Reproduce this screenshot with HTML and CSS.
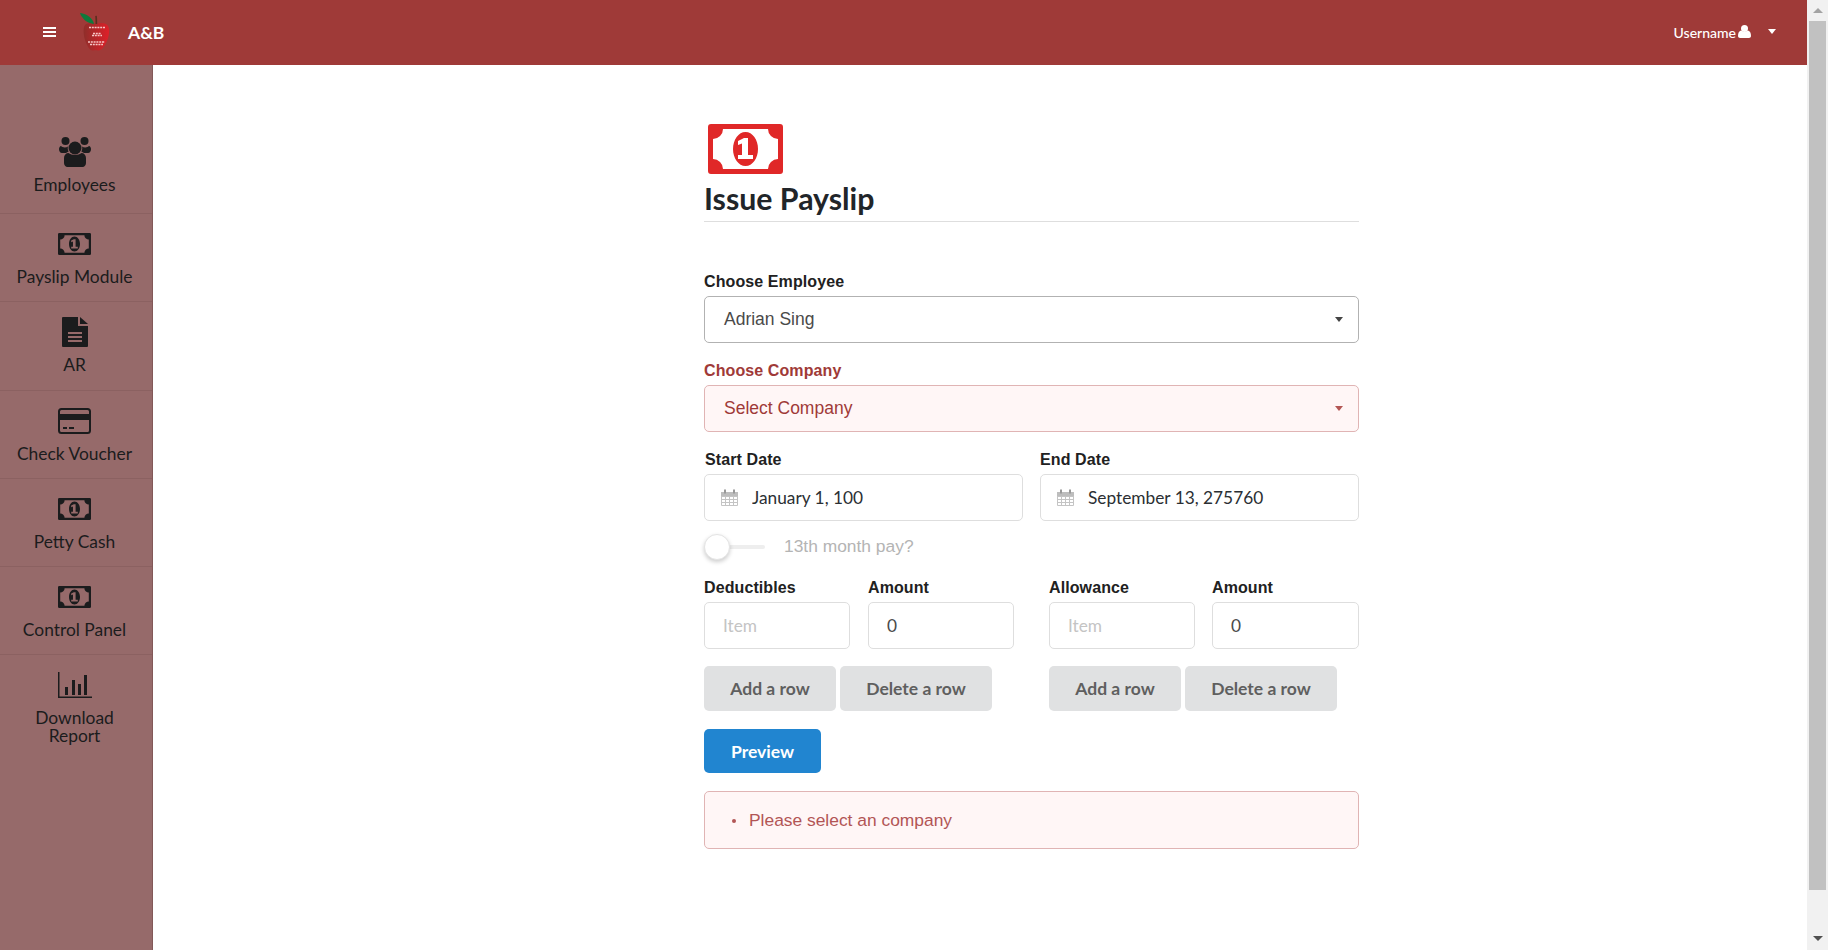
FILE: index.html
```html
<!DOCTYPE html>
<html>
  <head>
    <link rel="stylesheet" href="styles.css">
    <title>Issue Payslip</title>
  </head>
  <body>
    <!-- Shared icons -->
    <svg class="defs" width="0" height="0">
      <defs>
        <linearGradient id="appleRed" x1="0" x2="1" y1="0" y2="0">
          <stop offset="0" stop-color="#8f2e2a"/>
          <stop offset="0.5" stop-color="#b8262a"/>
          <stop offset="1" stop-color="#df1f28"/>
        </linearGradient>
      </defs>
      <symbol id="money" viewBox="0 0 75 50">
        <path fill-rule="evenodd" d="M3 0H72a3 3 0 0 1 3 3V47a3 3 0 0 1-3 3H3a3 3 0 0 1-3-3V3a3 3 0 0 1 3-3ZM15 5a10 10 0 0 1-10 10V35a10 10 0 0 1 10 10H60a10 10 0 0 1 10-10V15a10 10 0 0 1-10-10Z" fill="currentColor"/>
        <path fill-rule="evenodd" d="M37.5 8c7 0 12.500 7.600 12.500 17s-5.500 17-12.500 17-12.500-7.600-12.500-17 5.500-17 12.500-17ZM36 14l-6 3v4l4-1.500V31h-4v4h15v-4h-5V14Z" fill="currentColor"/>
      </symbol>
    </svg>

    <div class="app">
      <div class="page">
        <header class="topbar">
          <div class="brand">
            <svg class="burger" width="13" height="10" viewBox="0 0 13 10"><path d="M0 0h13v2H0zM0 4h13v2H0zM0 8h13v2H0z" fill="#fff"/></svg>
            <svg class="logo" width="30" height="38" viewBox="0 0 30 38">
              <path d="M16 11c-3-1.500-7-1.500-10 0C3 13 3 20 5 27c2 6 5 11 8 10.500 2-.5 3-.5 5 0 4 .5 8-6 10-12.500 2-7 1.500-12-2-14-3-1.500-7-1-10 0Z" fill="url(#appleRed)"/>
              <path d="M0 0c2 6 7 10 14 11C13 5 7 1 0 0Z" fill="#0f7a3c"/>
              <path d="M15.500 11c0-3 0-5-.3-8l1.600-.3c.4 3 .4 5.300.4 8.300Z" fill="#5b2d1e"/>
              <path d="M9 14.500h16M13 20.500h8M12 22.500h10M8 29h17M10 31.500h13" fill="none" stroke="#f6c4c4" stroke-width="1.300" stroke-dasharray="2 .8"/>
            </svg>
            <span class="brand-name">A&amp;B</span>
          </div>
          <div class="user">
            <span>Username</span>
            <svg width="13" height="13" viewBox="0 0 13 13"><circle cx="6.500" cy="3.500" r="3.500" fill="#fff"/><path d="M0 11c0-3 1-5 3-5.500 2 1.500 5 1.500 7 0 2 .5 3 2.500 3 5.500 0 1.300-1 2-2 2H2c-1 0-2-.7-2-2Z" fill="#fff"/></svg>
            <i class="caret caret-user"></i>
          </div>
        </header>

        <div class="body">
          <nav class="sidebar">
            <a class="side-item first">
              <svg class="side-icon" width="32" height="30" viewBox="0 0 32 30" fill="currentColor">
                <circle cx="6.500" cy="4" r="4"/><circle cx="25.500" cy="4" r="4"/><circle cx="16" cy="11" r="6.500"/>
                <path d="M0 12c0-1.500 1-3 2-3 1 1.500 5 2 7 .5-.5 1.500-.3 3.500.7 5-1 .3-2 1-2.700 1.500H3c-2 0-3-2-3-4ZM32 12c0-1.500-1-3-2-3-1 1.500-5 2-7 .5.5 1.500.3 3.500-.7 5 1 .3 2 1 2.700 1.500h4c2 0 3-2 3-4Z"/>
                <path d="M5 21c0-3 2-5 4.500-5 3 2.500 10 2.500 13 0C25 16 27 18 27 21v5c0 2-1.500 4-3.500 4H8.500C6.500 30 5 28 5 26Z"/>
              </svg>
              <span>Employees</span>
            </a>
            <a class="side-item">
              <svg class="side-icon" width="33" height="22"><use href="#money"/></svg>
              <span>Payslip Module</span>
            </a>
            <a class="side-item">
              <svg class="side-icon" width="26" height="30" viewBox="0 0 26 30" fill="currentColor">
                <path fill-rule="evenodd" d="M1 0H16V9H26V29a1 1 0 0 1-1 1H1a1 1 0 0 1-1-1V1a1 1 0 0 1 1-1ZM6 15v2H20V15ZM6 19v2H20V19ZM6 23v2H20V23Z"/>
                <path d="M18 0l8 7H18Z"/>
              </svg>
              <span>AR</span>
            </a>
            <a class="side-item">
              <svg class="side-icon" width="33" height="26" viewBox="0 0 33 26">
                <rect x="1" y="1" width="31" height="24" rx="2.500" fill="none" stroke="currentColor" stroke-width="2"/>
                <path d="M1 6h31v6H1zM5 19h4v2H5zM11 19h5v2h-5z" fill="currentColor"/>
              </svg>
              <span>Check Voucher</span>
            </a>
            <a class="side-item">
              <svg class="side-icon" width="33" height="22"><use href="#money"/></svg>
              <span>Petty Cash</span>
            </a>
            <a class="side-item">
              <svg class="side-icon" width="33" height="22"><use href="#money"/></svg>
              <span>Control Panel</span>
            </a>
            <a class="side-item">
              <svg class="side-icon" width="34" height="26" viewBox="0 0 34 26" fill="currentColor">
                <path d="M0 0h1.500v24.500H34V26H0ZM7 15h3v8H7ZM14 8h3v15h-3ZM20 12h3v11h-3ZM26 3h3v20h-3Z"/>
              </svg>
              <span>Download<br>Report</span>
            </a>
          </nav>

          <main class="content">
            <div class="panel">
              <svg class="title-icon" width="75" height="50"><use href="#money"/></svg>
              <h1 class="title">Issue Payslip</h1>

              <form class="form">
                <div class="field">
                  <label>Choose Employee</label>
                  <div class="select">
                    <span>Adrian Sing</span>
                    <i class="caret"></i>
                  </div>
                </div>

                <div class="field error">
                  <label>Choose Company</label>
                  <div class="select">
                    <span>Select Company</span>
                    <i class="caret"></i>
                  </div>
                </div>

                <div class="date-row">
                  <div class="field">
                    <label class="nudge">Start Date</label>
                    <div class="date-input">
                      <svg class="cal"><use href="#cal"/></svg>
                      <input type="text" value="January 1, 100">
                    </div>
                  </div>
                  <div class="field">
                    <label>End Date</label>
                    <div class="date-input">
                      <svg class="cal"><use href="#cal"/></svg>
                      <input type="text" value="September 13, 275760">
                    </div>
                  </div>
                </div>

                <div class="toggle">
                  <span class="track"><span class="knob"></span></span>
                  <span class="toggle-label">13th month pay?</span>
                </div>

                <div class="rows">
                  <div class="group">
                    <div class="pair">
                      <div class="field">
                        <label>Deductibles</label>
                        <input class="box" type="text" placeholder="Item">
                      </div>
                      <div class="field">
                        <label>Amount</label>
                        <input class="box" type="text" value="0">
                      </div>
                    </div>
                    <div class="actions">
                      <button type="button" class="btn add">Add a row</button>
                      <button type="button" class="btn del">Delete a row</button>
                    </div>
                  </div>
                  <div class="group">
                    <div class="pair">
                      <div class="field">
                        <label>Allowance</label>
                        <input class="box" type="text" placeholder="Item">
                      </div>
                      <div class="field">
                        <label>Amount</label>
                        <input class="box" type="text" value="0">
                      </div>
                    </div>
                    <div class="actions">
                      <button type="button" class="btn add">Add a row</button>
                      <button type="button" class="btn del">Delete a row</button>
                    </div>
                  </div>
                </div>

                <button type="button" class="btn preview">Preview</button>

                <div class="message">
                  <ul>
                    <li>Please select an company</li>
                  </ul>
                </div>
              </form>
            </div>
          </main>
        </div>
      </div>

      <!-- Scrollbar strip -->
      <div class="scrollbar">
        <i class="arrow up"></i>
        <div class="thumb"></div>
        <i class="arrow down"></i>
      </div>
    </div>

    <svg class="defs" width="0" height="0">
      <symbol id="cal" viewBox="0 0 17 17">
        <path d="M.5 3.500h16v13H.5zM.5 7.500h16M.5 10.500h16M.5 13.500h16M4.500 7.500v9M8.500 7.500v9M12.500 7.500v9" fill="none" stroke="#c4c4c4"/>
        <path d="M0 3h17v4H0z" fill="#bdbdbd"/>
        <path d="M3 .5h2v4H3zM12 .5h2v4h-2z" fill="#999"/>
      </symbol>
    </svg>
  </body>
</html>
```

FILE: styles.css
```css
/* RESETS */
*,
*::before,
*::after {
  box-sizing: border-box;
}
html,
body {
  margin: 0;
  height: 100%;
  overflow: hidden;
}
body {
  font-family: "Liberation Sans", Arial, sans-serif;
  font-size: 14px;
  color: #212121;
  background: #fff;
}
ul {
  list-style: none;
  margin: 0;
  padding: 0;
}
.defs {
  display: block;
  height: 0;
}

/* Page frame */
.app {
  display: flex;
  height: 950px;
}
.page {
  flex: 1;
  display: flex;
  flex-direction: column;
  min-width: 0;
}
.scrollbar {
  width: 21px;
  background: #f1f1f1;
  display: flex;
  flex-direction: column;
  align-items: center;
}
.thumb {
  width: 17px;
  height: 869px;
  background: #c1c1c1;
}
.arrow {
  display: block;
  width: 0;
  height: 0;
  border-left: 5px solid transparent;
  border-right: 5px solid transparent;
}
.arrow.up {
  border-bottom: 5px solid #a3a3a3;
  margin: 8px 0;
}
.arrow.down {
  border-top: 5px solid #505050;
  margin-top: 46px;
}

/* Top bar */
.topbar {
  height: 65px;
  flex: none;
  background: #9f3a38;
  color: #fff;
  display: flex;
  align-items: center;
  justify-content: space-between;
}
.brand {
  display: flex;
  align-items: center;
  margin-bottom: 1px;
}
.burger {
  margin-left: 43px;
}
.logo {
  margin-left: 24px;
}
.brand-name {
  margin-left: 18px;
  font-family: Lato, sans-serif;
  font-weight: 700;
  font-size: 17.500px;
}
.user {
  display: flex;
  align-items: center;
  font-family: Lato, sans-serif;
  font-size: 14px;
  font-weight: 500;
  margin-right: 31px;
}
.user svg {
  margin-left: 2px;
  margin-bottom: 2px;
}
.caret {
  width: 0;
  height: 0;
  border-left: 4.500px solid transparent;
  border-right: 4.500px solid transparent;
  border-top: 5px solid #444;
}
.caret-user {
  border-top-color: #fff;
  margin-left: 17px;
  margin-bottom: 2px;
}

/* Sidebar */
.body {
  flex: 1;
  display: flex;
  min-height: 0;
}
.sidebar {
  width: 153px;
  flex: none;
  background: #966a6a;
  border-right: 1px solid #825858;
  padding-top: 56px;
  font-family: Lato, sans-serif;
  font-size: 17.400px;
  line-height: 17.500px;
  color: #1b1c1d;
}
.side-item {
  display: flex;
  flex-direction: column;
  align-items: center;
  text-align: center;
  height: 88.300px;
  padding: 14px 3px 0 0;
  border-bottom: 1px solid #8b6161;
}
.side-item.first {
  height: 93px;
  padding-top: 15px;
}
.side-item:last-child {
  border-bottom: none;
}
.side-icon {
  flex: none;
  height: 32px;
  margin-bottom: 8px;
  display: block;
}

/* Main form */
.content {
  flex: 1;
  padding: 59px 0 0 551px;
}
.panel {
  width: 655px;
}
.title-icon {
  display: block;
  margin-left: 4px;
  color: #e02828;
}
.title {
  margin: 4px 0 0;
  padding-bottom: 3px;
  font-family: Lato, sans-serif;
  font-weight: 700;
  font-size: 30.300px;
  line-height: 40px;
  color: #212529;
  border-bottom: 1px solid #dedede;
}
.form {
  margin-top: 50px;
  display: flex;
  flex-direction: column;
}
.field label {
  display: block;
  font-weight: 700;
  font-size: 16px;
  letter-spacing: 0.1px;
  line-height: 18px;
  padding-top: 1px;
  margin-bottom: 5px;
  color: #212121;
}
.field label.nudge {
  padding-left: 1px;
}
.select {
  height: 47px;
  border: 1px solid #b2b2b2;
  border-radius: 5px;
  padding: 0 15px 0 19px;
  display: flex;
  align-items: center;
  justify-content: space-between;
  font-size: 17.500px;
  color: #4a4a4a;
}
.form > .field {
  margin-bottom: 18px;
}
.field.error label {
  color: #9f3a38;
}
.field.error .select {
  background: #fff6f6;
  border-color: #e0b4b4;
  color: #9f3a38;
}
.field.error .caret {
  border-top-color: #b35654;
}
.date-row {
  display: grid;
  grid-template-columns: 319px 319px;
  gap: 17px;
}
.date-input {
  height: 47px;
  border: 1px solid #dedede;
  border-radius: 5px;
  display: flex;
  align-items: center;
  padding-left: 16px;
}
.cal {
  width: 17px;
  height: 17px;
  flex: none;
}
.date-input input {
  border: none;
  outline: none;
  background: transparent;
  flex: 1;
  min-width: 0;
  padding: 0 0 0 14px;
  font-family: Lato, sans-serif;
  font-size: 17.300px;
  color: #2b2f33;
}
.toggle {
  display: flex;
  align-items: center;
  margin-top: 13px;
  height: 26px;
}
.track {
  position: relative;
  display: block;
  width: 61px;
  height: 4px;
  border-radius: 2px;
  background: #eeeeee;
}
.knob {
  position: absolute;
  left: 0;
  top: -11px;
  width: 26px;
  height: 26px;
  border-radius: 50%;
  background: #fff;
  border: 1px solid #e4e4e4;
  box-shadow: 0 2px 4px rgba(0, 0, 0, 0.2);
}
.toggle-label {
  margin: 0 0 2px 19px;
  font-size: 17.400px;
  color: #b4b4b4;
}
.rows {
  display: flex;
  gap: 35px;
  margin-top: 18px;
}
.group {
  width: 310px;
}
.pair {
  display: grid;
  grid-template-columns: 146px 146px;
  gap: 18px;
}
.group:last-child .pair {
  grid-template-columns: 146px 147px;
  gap: 17px;
}
.box {
  display: block;
  width: 100%;
  height: 47px;
  border: 1px solid #dedede;
  border-radius: 5px;
  padding: 0 18px;
  outline: none;
  font-family: Lato, sans-serif;
  font-size: 17.300px;
  color: #4a4a4a;
}
.box::placeholder {
  color: #c4c4c4;
  opacity: 1;
}
.actions {
  display: flex;
  gap: 4px;
  margin-top: 17px;
}
.btn {
  height: 45px;
  border: none;
  border-radius: 5px;
  background: #e0e1e2;
  color: #5f5f5f;
  font-family: Lato, sans-serif;
  font-weight: 700;
  font-size: 17.500px;
  padding: 0;
}
.btn.add {
  width: 132px;
}
.btn.del {
  width: 152px;
}
.btn.preview {
  width: 117px;
  height: 44px;
  margin-top: 18px;
  background: #2185d0;
  color: #fff;
}
.message {
  margin-top: 18px;
  height: 58px;
  border: 1px solid #e0b4b4;
  border-radius: 5px;
  background: #fff6f6;
  color: #b25555;
  font-size: 17.400px;
  display: flex;
  align-items: center;
  padding: 1px 0 0 44px;
}
.message li {
  position: relative;
}
.message li::before {
  content: "";
  position: absolute;
  left: -17px;
  top: 9px;
  width: 4px;
  height: 4px;
  border-radius: 50%;
  background: #b25555;
}
```
